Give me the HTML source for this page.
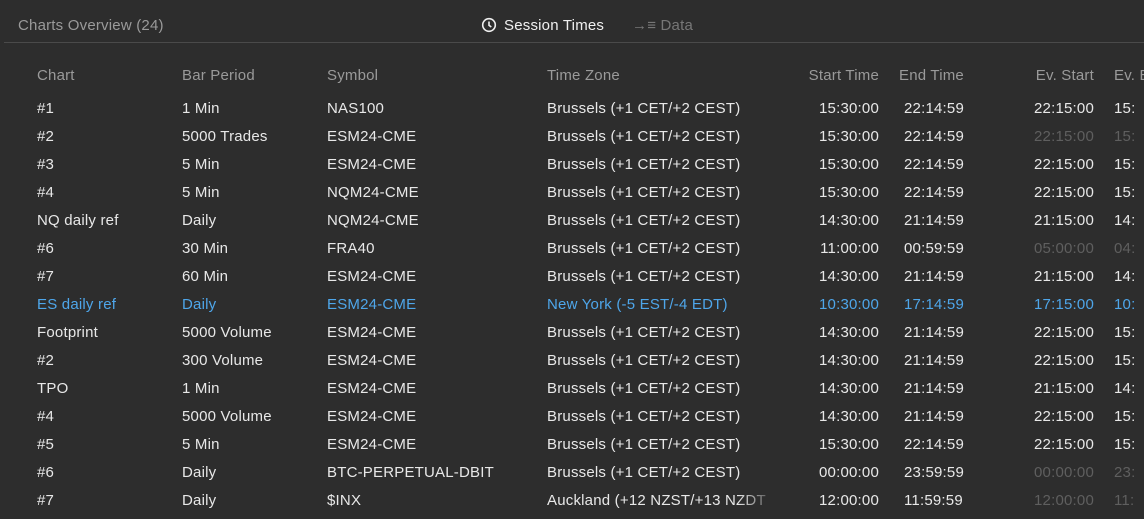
<!DOCTYPE html>
<html><head><meta charset="utf-8"><style>
body{margin:0;width:1144px;height:519px;background:#2d2d2d;overflow:hidden;font-family:"Liberation Sans",sans-serif;font-size:15px;color:#e8e8e8;position:relative}
.t{position:absolute;white-space:nowrap;letter-spacing:0.2px}
.h{color:#9a9a9a}
.d{color:#5f5f5f}
.b{color:#4ea6ea}
.r{text-align:right}
.line{position:absolute;left:4px;right:0;top:42px;height:1px;background:#4a4a4a}
</style></head><body>
<div class="t h" style="left:18px;top:17px">Charts Overview (24)</div>
<svg style="position:absolute;left:481px;top:17px" width="16" height="16" viewBox="0 0 16 16"><circle cx="8" cy="8" r="6.3" fill="none" stroke="#eee" stroke-width="1.6"/><path d="M8 4.5V8.3L10.3 10" fill="none" stroke="#eee" stroke-width="1.6"/></svg>
<div class="t" style="left:504px;top:17px;color:#f0f0f0">Session Times</div>
<div class="t" style="left:632px;top:17px;color:#777">→≡ Data</div>
<div class="line"></div>
<div id="g"></div>
<script>
const rows=[
["#1","1 Min","NAS100","Brussels (+1 CET/+2 CEST)","15:30:00","22:14:59","22:15:00","15:",""],
["#2","5000 Trades","ESM24-CME","Brussels (+1 CET/+2 CEST)","15:30:00","22:14:59","22:15:00","15:","dim"],
["#3","5 Min","ESM24-CME","Brussels (+1 CET/+2 CEST)","15:30:00","22:14:59","22:15:00","15:",""],
["#4","5 Min","NQM24-CME","Brussels (+1 CET/+2 CEST)","15:30:00","22:14:59","22:15:00","15:",""],
["NQ daily ref","Daily","NQM24-CME","Brussels (+1 CET/+2 CEST)","14:30:00","21:14:59","21:15:00","14:",""],
["#6","30 Min","FRA40","Brussels (+1 CET/+2 CEST)","11:00:00","00:59:59","05:00:00","04:","dim"],
["#7","60 Min","ESM24-CME","Brussels (+1 CET/+2 CEST)","14:30:00","21:14:59","21:15:00","14:",""],
["ES daily ref","Daily","ESM24-CME","New York (-5 EST/-4 EDT)","10:30:00","17:14:59","17:15:00","10:","blue"],
["Footprint","5000 Volume","ESM24-CME","Brussels (+1 CET/+2 CEST)","14:30:00","21:14:59","22:15:00","15:",""],
["#2","300 Volume","ESM24-CME","Brussels (+1 CET/+2 CEST)","14:30:00","21:14:59","22:15:00","15:",""],
["TPO","1 Min","ESM24-CME","Brussels (+1 CET/+2 CEST)","14:30:00","21:14:59","21:15:00","14:",""],
["#4","5000 Volume","ESM24-CME","Brussels (+1 CET/+2 CEST)","14:30:00","21:14:59","22:15:00","15:",""],
["#5","5 Min","ESM24-CME","Brussels (+1 CET/+2 CEST)","15:30:00","22:14:59","22:15:00","15:",""],
["#6","Daily","BTC-PERPETUAL-DBIT","Brussels (+1 CET/+2 CEST)","00:00:00","23:59:59","00:00:00","23:","dim"],
["#7","Daily","$INX","Auckland (+12 NZST/+13 NZDT","12:00:00","11:59:59","12:00:00","11:","dim"]];
let h='';
function c(x,y,txt,cls,st){h+=`<div class="t ${cls}" style="left:${x}px;top:${y}px;${st||''}">${txt}</div>`}
c(37,67,"Chart","h");c(182,67,"Bar Period","h");c(327,67,"Symbol","h");c(547,67,"Time Zone","h");
h+=`<div class="t h r" style="right:${1144-879}px;top:67px">Start Time</div>`;
c(899,67,"End Time","h");
h+=`<div class="t h r" style="right:${1144-1094}px;top:67px">Ev. Start</div>`;
c(1114,67,"Ev. End","h");
rows.forEach((r,i)=>{const y=100+i*28;const bc=r[8]=="blue"?"b":"";const ec=r[8]=="dim"?"d":bc;
c(37,y,r[0],bc);c(182,y,r[1],bc);c(327,y,r[2],bc);
c(547,y,r[3],bc,i==14?"width:232px;overflow:hidden;-webkit-mask-image:linear-gradient(90deg,#000 82%,transparent);":"");
h+=`<div class="t r ${bc}" style="right:${1144-879}px;top:${y}px">${r[4]}</div>`;
c(904,y,r[5],bc);
h+=`<div class="t r ${ec}" style="right:${1144-1094}px;top:${y}px">${r[6]}</div>`;
c(1114,y,r[7],ec);});
document.getElementById('g').innerHTML=h;
</script>
</body></html>
